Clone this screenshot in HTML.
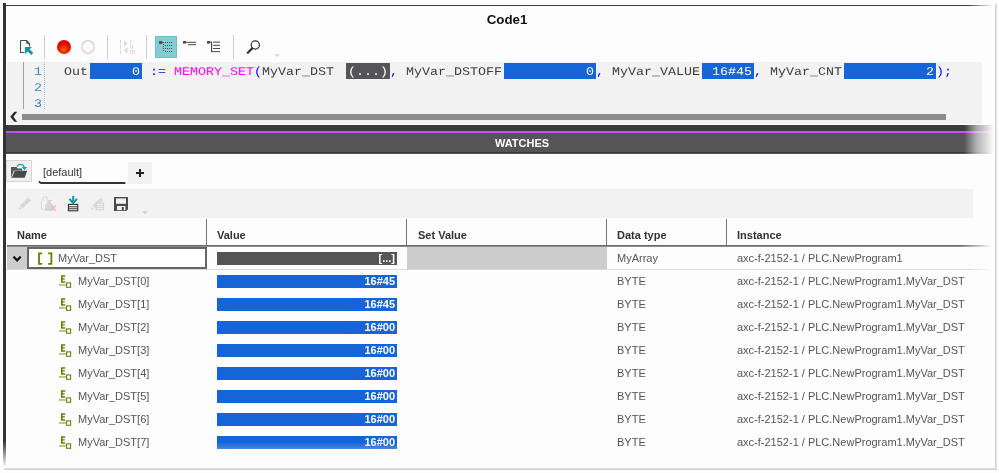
<!DOCTYPE html>
<html>
<head>
<meta charset="utf-8">
<title>Code1</title>
<style>
html,body{margin:0;padding:0;}
body{width:999px;height:473px;position:relative;overflow:hidden;background:#fdfdfd;font-family:"Liberation Sans",sans-serif;font-size:11px;color:#555;}
.a{position:absolute;}
.t{position:absolute;white-space:nowrap;line-height:1;}
/* frame */
#lbar{left:3px;top:3px;width:3px;height:464px;background:linear-gradient(to bottom,#333335 0,#333335 438px,rgba(51,51,53,0) 464px);}
#tline{left:6px;top:5px;width:990px;height:1px;background:linear-gradient(to right,#3c3c3e 0,#3c3c3e 962px,rgba(60,60,62,0) 987px);}
#rline{left:995px;top:4px;width:2px;height:466px;background:linear-gradient(to right,#d2d2d2 50%,#e2e2e2 50%);}
#bline{left:4px;top:468px;width:993px;height:2px;background:linear-gradient(to bottom,#dcdcdc 50%,#d4d4d4 50%);}
/* title */
#title{left:407px;top:13px;width:200px;text-align:center;font-weight:bold;font-size:13.33px;color:#111;}
/* editor */
#ed{left:7px;top:62px;width:975px;height:62px;background:#f2f2f2;}
.mono{font-family:"Liberation Mono",monospace;font-size:13.33px;text-rendering:geometricPrecision;transform:scaleY(0.88);transform-origin:0 10px;}
.ln{color:#2b91af;}
.code{color:#3c3c3c;}
.bl{color:#0000ff;}
.mg{color:#ff00ff;}
.vb{position:absolute;top:63px;height:16px;background:#1565d8;}
.vb span{position:absolute;right:2px;top:3px;color:#fff;font-family:"Liberation Mono",monospace;font-size:13.33px;line-height:1;white-space:pre;text-rendering:geometricPrecision;transform:scaleY(0.88);transform-origin:0 10px;}
/* watches bar */
#wbar{left:6px;top:125px;width:989px;height:28.5px;background:#555557;}
#wbar .top{left:0;top:0;width:100%;height:6px;background:#3b3b3d;}
#wbar .pur{left:0;top:6px;width:100%;height:2px;background:#c44ff2;}
#wbar .bot{left:0;top:27.3px;width:100%;height:1.2px;background:#3b3b3d;}
#wfade{left:964px;top:125px;width:31px;height:29px;background:linear-gradient(to right,rgba(253,253,253,0),rgba(253,253,253,0.55) 40%,rgba(253,253,253,1) 97%);}
#wt{left:422px;top:138px;width:200px;text-align:center;font-weight:bold;font-size:11px;color:#fff;}
/* table */
.row{position:absolute;left:6px;width:990px;height:23px;}
.cell{position:absolute;white-space:nowrap;line-height:1;font-size:11px;color:#555;}
.bar{position:absolute;left:217px;width:180px;height:13px;background:#1565d8;color:#fff;font-weight:bold;font-size:11px;line-height:13px;text-align:right;box-sizing:border-box;padding-right:2px;}
</style>
</head>
<body>
<div id="root" style="position:absolute;left:0;top:0;width:999px;height:473px;will-change:transform;">
<!-- frame -->
<div class="a" id="lbar"></div>
<div class="a" id="tline"></div>
<div class="a" id="rline"></div>
<div class="a" id="bline"></div>

<div class="t" id="title">Code1</div>


<!-- toolbar 1 -->
<svg class="a" style="left:0;top:30px;" width="300" height="32" viewBox="0 30 300 32">
 <!-- doc + arrow -->
 <path d="M20.5 40.5h6l3 3v3M20.5 40.5v12h4" fill="none" stroke="#4c4c4c" stroke-width="1.1"/>
 <path d="M26.3 40.6v3.2h3.2z" fill="#444"/>
 <path d="M25 47h7l-2.3 2.3 3.6 3.6-2.1 2.1-3.6-3.6-2.6 2.6z" fill="#1496a0"/>
 <!-- separators -->
 <rect x="44" y="35" width="1" height="24" fill="#cfcfcf"/>
 <rect x="107" y="35" width="1" height="24" fill="#cfcfcf"/>
 <rect x="146" y="35" width="1" height="24" fill="#cfcfcf"/>
 <rect x="233" y="35" width="1" height="24" fill="#cfcfcf"/>
 <defs><radialGradient id="rg" cx="0.48" cy="0.68" r="0.6"><stop offset="0" stop-color="#f06a08"/><stop offset="0.55" stop-color="#ea1a04"/><stop offset="1" stop-color="#e00000"/></radialGradient></defs>
 <circle cx="64" cy="47" r="7" fill="url(#rg)"/>
 <circle cx="88" cy="47" r="6.2" fill="#fdfdfd" stroke="#d6d6d6" stroke-width="1.5"/>
 <!-- disabled step icon -->
 <g fill="#dadada">
  <rect x="120" y="40" width="1" height="4"/><rect x="120" y="45" width="1" height="4"/><rect x="120" y="50" width="1" height="4"/>
  <path d="M124 40l3.4 3.5-3.4 3.5z"/><path d="M127.4 46.9l-3.4 3.5 3.4 3.5z"/>
  <rect x="130" y="40" width="1" height="4"/><rect x="130" y="45" width="1" height="4"/><rect x="130" y="50" width="1" height="4"/>
  <rect x="132" y="45" width="1" height="4"/><rect x="132" y="50" width="1" height="4"/>
  <rect x="134" y="50" width="1" height="4"/>
 </g>
 <!-- selected tree icon -->
 <rect x="155.5" y="36.5" width="21" height="21" fill="#80cdd2" stroke="#70bec4" stroke-width="1"/>
 <g fill="#5c4a4a" shape-rendering="crispEdges">
  <rect x="159" y="41" width="3" height="3"/><rect x="162" y="42" width="2" height="1"/>
  <rect x="165" y="42" width="1" height="1"/><rect x="167" y="42" width="1" height="1"/><rect x="169" y="42" width="1" height="1"/><rect x="171" y="42" width="1" height="1"/><rect x="165" y="45" width="1" height="1"/><rect x="167" y="45" width="1" height="1"/><rect x="169" y="45" width="1" height="1"/><rect x="171" y="45" width="1" height="1"/><rect x="165" y="48" width="1" height="1"/><rect x="167" y="48" width="1" height="1"/><rect x="169" y="48" width="1" height="1"/><rect x="171" y="48" width="1" height="1"/><rect x="165" y="51" width="1" height="1"/><rect x="167" y="51" width="1" height="1"/><rect x="169" y="51" width="1" height="1"/><rect x="171" y="51" width="1" height="1"/><rect x="163" y="44" width="1" height="1"/><rect x="163" y="46" width="1" height="1"/><rect x="163" y="48" width="1" height="1"/><rect x="163" y="50" width="1" height="1"/>
 </g>
 <!-- collapse icon -->
 <g fill="#4a4a4a">
  <rect x="183" y="41" width="3" height="2.6"/>
  <rect x="186" y="41.8" width="10" height="1"/>
  <rect x="188" y="44.2" width="8" height="1"/>
 </g>
 <!-- expand icon -->
 <g fill="#4a4a4a">
  <rect x="207" y="41" width="3" height="2.6"/>
  <rect x="210" y="41.6" width="1.8" height="1"/>
  <rect x="211" y="41.6" width="1.1" height="10.5"/>
  <rect x="213" y="41.6" width="7" height="1"/>
  <rect x="213" y="44.8" width="7" height="1"/>
  <rect x="213" y="48" width="7" height="1"/>
  <rect x="211" y="51.1" width="9" height="1"/>
 </g>
 <!-- magnifier -->
 <circle cx="255.3" cy="45" r="4.1" fill="#fff" stroke="#333" stroke-width="1.25"/>
 <path d="M252.2 48.4l-4.4 4.4" stroke="#333" stroke-width="2.2" stroke-linecap="round"/>
 <path d="M274.6 54.2h5l-2.5 2.8z" fill="#d0d0d0"/>
</svg>



<!-- editor -->
<div class="a" id="ed"></div>
<div class="a" style="left:23px;top:62px;width:1px;height:47px;background:#a0a0a0;"></div>
<div class="a" style="left:44px;top:62px;width:0;height:47px;border-left:1px dotted #8cc3d6;"></div>
<div class="t mono ln" style="left:34px;top:66px;">1</div>
<div class="t mono ln" style="left:34px;top:82px;">2</div>
<div class="t mono ln" style="left:34px;top:98px;">3</div>

<div class="t mono code" style="left:64px;top:66px;">Out</div>
<div class="vb" style="left:90px;width:52px;"><span>0</span></div>
<div class="t mono bl" style="left:150px;top:66px;">:=</div>
<div class="t mono mg" style="left:174px;top:66px;">MEMORY_SET</div>
<div class="t mono bl" style="left:254px;top:66px;">(</div>
<div class="t mono code" style="left:262px;top:66px;">MyVar_DST</div>
<div class="vb" style="left:346px;width:44px;background:#555557;"><span>(...)</span></div>
<div class="t mono bl" style="left:390px;top:66px;">,</div>
<div class="t mono code" style="left:406px;top:66px;">MyVar_DSTOFF</div>
<div class="vb" style="left:504px;width:92px;"><span>0</span></div>
<div class="t mono bl" style="left:596px;top:66px;">,</div>
<div class="t mono code" style="left:612px;top:66px;">MyVar_VALUE</div>
<div class="vb" style="left:702px;width:52px;"><span>16#45</span></div>
<div class="t mono bl" style="left:754px;top:66px;">,</div>
<div class="t mono code" style="left:770px;top:66px;">MyVar_CNT</div>
<div class="vb" style="left:844px;width:92px;"><span>2</span></div>
<div class="t mono bl" style="left:936px;top:66px;">);</div>

<!-- h scrollbar -->
<svg class="a" style="left:8px;top:110px;" width="12" height="14" viewBox="8 110 12 14"><path d="M14.4 111.8h2.8l-3.8 5 3.8 5h-2.8l-4.2-5z" fill="#2c2c2e"/></svg>
<div class="a" style="left:22px;top:114px;width:924px;height:6px;background:#8a8b8d;"></div>

<!-- watches bar -->
<div class="a" id="wbar"><div class="a top"></div><div class="a pur"></div><div class="a bot"></div></div>
<div class="a" id="wfade"></div>
<div class="t" id="wt">WATCHES</div>

<!-- tab row -->
<div class="a" style="left:6px;top:160px;width:26px;height:22px;background:#efefef;border:1px solid #d6d6d6;box-sizing:border-box;"></div>
<!-- folder icon -->
<svg class="a" style="left:6px;top:160px;" width="26" height="23" viewBox="6 160 26 23">
 <path d="M11 167h5.6l1 1.4h4.6v2h-8.2l-3 7.4z" fill="#575757"/>
 <path d="M14.6 170.8h12.6l-2.5 7h-13.4z" fill="#4a4a4a"/>
 <path d="M14.2 171.2l-2.4 6" stroke="#e8e8e8" stroke-width="0.7" fill="none"/>
 <path d="M17 166.3c1.6-2.6 5.8-2.7 7.2 0.6" fill="none" stroke="#1aa0aa" stroke-width="1.4"/>
 <path d="M21.7 166.9h5.5l-2.6 3z" fill="#1aa0aa"/>
</svg>
<div class="t" style="left:43px;top:167px;font-size:11px;color:#333;">[default]</div>
<svg class="a" style="left:38px;top:178px;" width="90" height="8" viewBox="38 178 90 8"><path d="M39.6 181.9q0.5 1.1 1.8 1.1H124.6" fill="none" stroke="#333" stroke-width="2" stroke-linecap="round"/></svg>
<div class="a" style="left:128px;top:162px;width:24px;height:22px;background:#f2f2f2;"></div>
<div class="a" style="left:136px;top:172px;width:8px;height:2px;background:#222;"></div>
<div class="a" style="left:139px;top:169px;width:2px;height:8px;background:#222;"></div>

<!-- toolbar 2 -->
<div class="a" style="left:7px;top:189px;width:966px;height:28.5px;background:#f2f2f2;"></div>
<!-- toolbar 2 icons -->
<svg class="a" style="left:6px;top:190px;" width="160" height="28" viewBox="6 190 160 28">
 <!-- pencil disabled -->
 <g fill="#d9d9d9">
  <path d="M28.2 197.4l2.8 2.8-8.4 8.2-2.8-2.8z"/>
  <path d="M19.2 206.4l2.6 2.6-3.2 0.8z"/>
 </g>
 <!-- paste disabled -->
 <g>
  <path d="M43.5 197h3.8v2.2h-1v1.6l1.6 1v7.2h-6.4v-7.2l1.6-1v-1.6h-0.6z" fill="#f4f4f4" stroke="#d4d4d4" stroke-width="0.9"/>
  <path d="M48 199.5h4.4v2h-1v1.6l2.4 1.4v7h-9.4v-7l2.4-1.4v-1.6h-0.8z" fill="#d6d6d6" stroke="#fafafa" stroke-width="0.8"/>
  <path d="M50.6 205.6l5.2 5.2M55.8 205.6l-5.2 5.2" stroke="#f3bfae" stroke-width="1.6"/>
 </g>
 <!-- import -->
 <g>
  <path d="M72.2 196h2v5h-2z" fill="#0b99a3"/>
  <path d="M68.7 199.5l1.4-1.3 3.1 3.2 3.1-3.2 1.4 1.3-4.5 4.9z" fill="#0b99a3"/>
  <rect x="67.6" y="203.8" width="11" height="7.6" fill="#fff"/>
  <rect x="68.4" y="204.4" width="9.4" height="6.4" fill="#fff" stroke="#2e2e2e" stroke-width="1.1"/>
  <rect x="68.4" y="206.3" width="9.4" height="1" fill="#2e2e2e"/>
  <rect x="68.4" y="208.3" width="9.4" height="1" fill="#2e2e2e"/>
  <path d="M70.8 201.4l2.4 2.6 2.4-2.6z" fill="#0b99a3"/>
 </g>
 <!-- pencil+list disabled -->
 <g>
  <path d="M100.4 197.4l2.8 2.8-8.2 8-2.8-2.8z" fill="#dcdcdc"/>
  <path d="M91.6 206.4l2.4 2.4-3.2 1z" fill="#dcdcdc"/>
  <rect x="96.2" y="203.2" width="7.4" height="6.6" fill="#f4f4f4" stroke="#d2d2d2" stroke-width="1"/>
  <rect x="96.2" y="205.2" width="7.4" height="0.9" fill="#d2d2d2"/>
  <rect x="96.2" y="207.2" width="7.4" height="0.9" fill="#d2d2d2"/>
 </g>
 <!-- save -->
 <g>
  <path d="M114 197h13.2q0.8 0 0.8 0.8v11.4l-1.8 1.8h-12.2z" fill="#4a4a4a"/>
  <rect x="116" y="198.4" width="10" height="5.4" fill="#f2f2f2"/>
  <rect x="117" y="206" width="8.4" height="4.2" fill="#f2f2f2"/>
  <rect x="121.8" y="207" width="2" height="3.2" fill="#4a4a4a"/>
 </g>
 <path d="M142 211.2h6l-3 3z" fill="#c9ced4"/>
</svg>

<!-- table header -->
<div class="t" style="left:17px;top:230px;font-weight:bold;color:#333;">Name</div>
<div class="t" style="left:217px;top:230px;font-weight:bold;color:#333;">Value</div>
<div class="t" style="left:418px;top:230px;font-weight:bold;color:#333;">Set Value</div>
<div class="t" style="left:617px;top:230px;font-weight:bold;color:#333;">Data type</div>
<div class="t" style="left:737px;top:230px;font-weight:bold;color:#333;">Instance</div>
<div class="a" style="left:206px;top:219px;width:1px;height:27px;background:#777;"></div>
<div class="a" style="left:406px;top:219px;width:1px;height:27px;background:#777;"></div>
<div class="a" style="left:606px;top:219px;width:1px;height:27px;background:#777;"></div>
<div class="a" style="left:726px;top:219px;width:1px;height:27px;background:#777;"></div>
<div class="a" style="left:7px;top:245px;width:988px;height:1px;background:linear-gradient(to right,#68686a 0,#68686a 953px,rgba(104,104,106,0) 985px);"></div>
<div class="a" style="left:7px;top:246px;width:988px;height:1px;background:linear-gradient(to right,#8e8e90 0,#8e8e90 953px,rgba(142,142,144,0) 985px);"></div>

<!-- selected row -->
<div class="a" style="left:7px;top:247px;width:20px;height:22px;background:#cdcdcd;"></div>
<div class="a" style="left:27px;top:247px;width:180px;height:22px;border:2px solid #666;box-sizing:border-box;background:#fff;"></div>
<svg class="a" style="left:11px;top:254px;" width="13" height="10" viewBox="11 254 13 10"><path d="M12.7 257.4l1.6-1.6 2.8 2.9 2.8-2.9 1.6 1.6-4.4 4.6z" fill="#141414"/></svg>
<svg class="a" style="left:36px;top:251px;" width="18" height="14" viewBox="36 251 18 14"><path d="M42.2 253.4h-3.2v10.4h3.2M48.2 253.4h3.2v10.4h-3.2" fill="none" stroke="#6b7d00" stroke-width="1.8"/></svg>
<div class="t" style="left:58px;top:253px;color:#555;">MyVar_DST</div>
<div class="bar" style="top:252px;background:#555557;padding-right:2px;">[...]</div>
<div class="a" style="left:407px;top:247px;width:200px;height:22px;background:#cdcdcd;"></div>
<div class="t" style="left:617px;top:253px;">MyArray</div>
<div class="t" style="left:737px;top:253px;">axc-f-2152-1 / PLC.NewProgram1</div>

<div class="a" style="left:6px;top:269px;width:989px;height:1px;background:linear-gradient(to right,#d9d9d9 0,#d9d9d9 962px,rgba(217,217,217,0) 986px);"></div>
<!-- rows -->
<svg width="0" height="0" style="position:absolute"><defs><g id="eico"><path d="M2 0.2h4.2v1.5H3.6v1.5h2.2v1.4H3.6v1.6h2.6v1.5H2z" fill="#6b7d00"/><rect x="0" y="9.3" width="7.2" height="1.3" fill="#9aa84e"/><rect x="7.6" y="7.9" width="4" height="4.4" fill="none" stroke="#6f8106" stroke-width="1.1"/></g></defs></svg>
<svg class="a eico" style="left:59px;top:275px;" width="13" height="13" viewBox="0 0 13 13"><use href="#eico"/></svg>
<div class="t" style="left:78px;top:276px;">MyVar_DST[0]</div>
<div class="bar" style="top:275px;">16#45</div>
<div class="t" style="left:617px;top:276px;">BYTE</div>
<div class="t" style="left:737px;top:276px;">axc-f-2152-1 / PLC.NewProgram1.MyVar_DST</div>
<svg class="a eico" style="left:59px;top:298px;" width="13" height="13" viewBox="0 0 13 13"><use href="#eico"/></svg>
<div class="t" style="left:78px;top:299px;">MyVar_DST[1]</div>
<div class="bar" style="top:298px;">16#45</div>
<div class="t" style="left:617px;top:299px;">BYTE</div>
<div class="t" style="left:737px;top:299px;">axc-f-2152-1 / PLC.NewProgram1.MyVar_DST</div>
<svg class="a eico" style="left:59px;top:321px;" width="13" height="13" viewBox="0 0 13 13"><use href="#eico"/></svg>
<div class="t" style="left:78px;top:322px;">MyVar_DST[2]</div>
<div class="bar" style="top:321px;">16#00</div>
<div class="t" style="left:617px;top:322px;">BYTE</div>
<div class="t" style="left:737px;top:322px;">axc-f-2152-1 / PLC.NewProgram1.MyVar_DST</div>
<svg class="a eico" style="left:59px;top:344px;" width="13" height="13" viewBox="0 0 13 13"><use href="#eico"/></svg>
<div class="t" style="left:78px;top:345px;">MyVar_DST[3]</div>
<div class="bar" style="top:344px;">16#00</div>
<div class="t" style="left:617px;top:345px;">BYTE</div>
<div class="t" style="left:737px;top:345px;">axc-f-2152-1 / PLC.NewProgram1.MyVar_DST</div>
<svg class="a eico" style="left:59px;top:367px;" width="13" height="13" viewBox="0 0 13 13"><use href="#eico"/></svg>
<div class="t" style="left:78px;top:368px;">MyVar_DST[4]</div>
<div class="bar" style="top:367px;">16#00</div>
<div class="t" style="left:617px;top:368px;">BYTE</div>
<div class="t" style="left:737px;top:368px;">axc-f-2152-1 / PLC.NewProgram1.MyVar_DST</div>
<svg class="a eico" style="left:59px;top:390px;" width="13" height="13" viewBox="0 0 13 13"><use href="#eico"/></svg>
<div class="t" style="left:78px;top:391px;">MyVar_DST[5]</div>
<div class="bar" style="top:390px;">16#00</div>
<div class="t" style="left:617px;top:391px;">BYTE</div>
<div class="t" style="left:737px;top:391px;">axc-f-2152-1 / PLC.NewProgram1.MyVar_DST</div>
<svg class="a eico" style="left:59px;top:413px;" width="13" height="13" viewBox="0 0 13 13"><use href="#eico"/></svg>
<div class="t" style="left:78px;top:414px;">MyVar_DST[6]</div>
<div class="bar" style="top:413px;">16#00</div>
<div class="t" style="left:617px;top:414px;">BYTE</div>
<div class="t" style="left:737px;top:414px;">axc-f-2152-1 / PLC.NewProgram1.MyVar_DST</div>
<svg class="a eico" style="left:59px;top:436px;" width="13" height="13" viewBox="0 0 13 13"><use href="#eico"/></svg>
<div class="t" style="left:78px;top:437px;">MyVar_DST[7]</div>
<div class="bar" style="top:436px;background:linear-gradient(to bottom,#1565d8 50%,#4b86de 100%);">16#00</div>
<div class="t" style="left:617px;top:437px;">BYTE</div>
<div class="t" style="left:737px;top:437px;">axc-f-2152-1 / PLC.NewProgram1.MyVar_DST</div>

</div>
</body>
</html>
